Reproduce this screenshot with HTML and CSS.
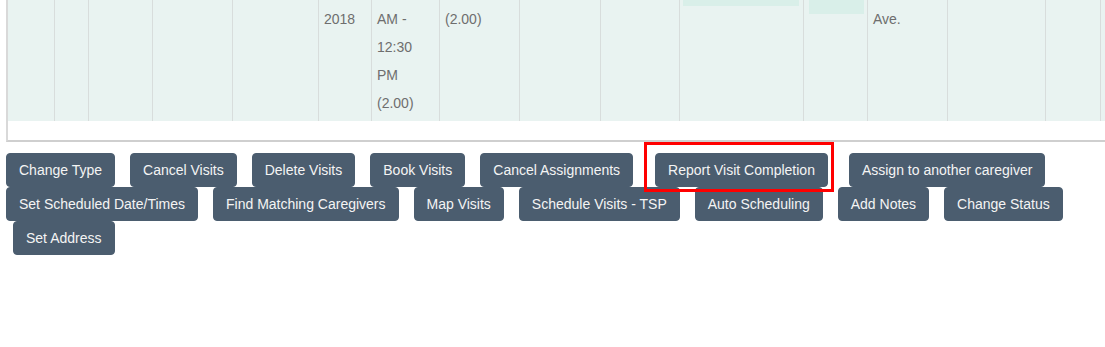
FILE: index.html
```html
<!DOCTYPE html>
<html>
<head>
  <meta charset="UTF-8">
  <title>Visits</title>
  <link rel="stylesheet" href="styles.css">
</head>
<body>

  <!-- Visits grid (scrolled) -->
  <div class="grid-wrap">
    <div class="grid-row">
      <div class="cell"></div>
      <div class="cell"></div>
      <div class="cell"></div>
      <div class="cell"></div>
      <div class="cell"></div>
      <div class="cell">2018</div>
      <div class="cell">AM -<br>12:30<br>PM<br>(2.00)</div>
      <div class="cell">(2.00)</div>
      <div class="cell"></div>
      <div class="cell"></div>
      <div class="cell"><div class="tag tag-wide"></div></div>
      <div class="cell"><div class="tag tag-small"></div></div>
      <div class="cell">Ave.</div>
      <div class="cell"></div>
      <div class="cell"></div>
      <div class="cell"></div>
    </div>
  </div>

  <!-- Actions -->
  <div class="actions">
    <div class="btn-row">
      <button class="btn">Change Type</button>
      <button class="btn">Cancel Visits</button>
      <button class="btn">Delete Visits</button>
      <button class="btn">Book Visits</button>
      <button class="btn">Cancel Assignments</button>
      <span class="highlight"><button class="btn">Report Visit Completion</button></span>
      <button class="btn">Assign to another caregiver</button>
    </div>
    <div class="btn-row">
      <button class="btn">Set Scheduled Date/Times</button>
      <button class="btn">Find Matching Caregivers</button>
      <button class="btn">Map Visits</button>
      <button class="btn">Schedule Visits - TSP</button>
      <button class="btn">Auto Scheduling</button>
      <button class="btn">Add Notes</button>
      <button class="btn">Change Status</button>
    </div>
    <div class="btn-row indent">
      <button class="btn">Set Address</button>
    </div>
  </div>

</body>
</html>
```

FILE: styles.css
```css
body { margin: 0; font-family: "Liberation Sans", Arial, sans-serif; font-size: 14px; background: #fff; }

.grid-wrap { margin-left: 6px; border-left: 2px solid #d9d9d9; border-bottom: 2px solid #cfcfcf; padding-bottom: 19px; overflow: hidden; }
.grid-row { display: grid; grid-template-columns: 46px 34px 64px 80px 86px 53px 68px 80px 81px 79px 124px 64px 80px 98px 55px 60px; background: #e9f3f1; }
.cell { border-left: 1px solid #d8dddc; padding: 5px 4px 4px 5px; line-height: 28px; color: #6e6e6e; }
.cell:first-child { border-left: none; }
.tag { background: #d9efe9; margin-top: -5px; }
.tag-wide { height: 6px; margin-left: -2px; margin-right: 0; }
.tag-small { height: 14px; margin-right: -1px; }

.actions { margin-top: 11px; padding-left: 6px; }
.btn-row { display: flex; gap: 15px; }
.btn-row.indent { padding-left: 7px; }
.btn { font-family: inherit; font-size: 14px; line-height: 20px; padding: 6px 12px; border: 1px solid #4b5d6f; border-radius: 4px; background: #4b5d6f; color: #f4f4f4; white-space: nowrap; }
.highlight { position: relative; margin: 0 6px 0 7px; display: flex; }
.highlight::after { content: ""; position: absolute; top: -11px; left: -11px; right: -6px; bottom: -5px; border: 3px solid #f00; z-index: 2; }
```
